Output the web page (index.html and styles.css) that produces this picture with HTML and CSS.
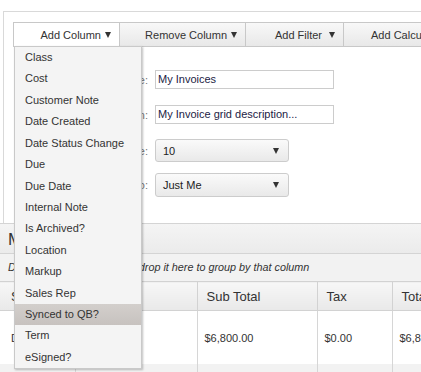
FILE: index.html
```html
<!DOCTYPE html>
<html>
<head>
<meta charset="utf-8">
<link rel="stylesheet" href="styles.css">
</head>
<body>
<div class="page">
  <section class="panel">
    <div class="toolbar">
      <div class="tb-item">
        <button class="tb-btn active w-add">Add Column <span class="caret"></span></button>
        <ul class="menu">
          <li>Class</li>
          <li>Cost</li>
          <li>Customer Note</li>
          <li>Date Created</li>
          <li>Date Status Change</li>
          <li>Due</li>
          <li>Due Date</li>
          <li>Internal Note</li>
          <li>Is Archived?</li>
          <li>Location</li>
          <li>Markup</li>
          <li>Sales Rep</li>
          <li class="hover">Synced to QB?</li>
          <li>Term</li>
          <li>eSigned?</li>
        </ul>
      </div>
      <button class="tb-btn w-remove">Remove Column <span class="caret"></span></button>
      <button class="tb-btn w-filter">Add Filter <span class="caret"></span></button>
      <button class="tb-btn w-calc">Add Calculation</button>
    </div>
    <div class="form">
      <div class="row r1">
        <label class="lbl">Grid Name:</label>
        <div class="input">My Invoices</div>
      </div>
      <div class="row r2">
        <label class="lbl">Grid Description:</label>
        <div class="input">My Invoice grid description...</div>
      </div>
      <div class="row r3">
        <label class="lbl">Page Size:</label>
        <div class="select"><span>10</span><span class="sel-caret"></span></div>
      </div>
      <div class="row r4">
        <label class="lbl">Visible To:</label>
        <div class="select"><span>Just Me</span><span class="sel-caret"></span></div>
      </div>
    </div>
  </section>
  <section class="grid">
    <div class="grid-title">My Invoices</div>
    <div class="group-row">Drag a column header and drop it here to group by that column</div>
    <table class="tbl">
      <colgroup>
        <col class="c1"><col class="c2"><col class="c3"><col class="c4"><col class="c5">
      </colgroup>
      <thead>
        <tr><th>Status</th><th>Customer</th><th>Sub Total</th><th>Tax</th><th>Total</th></tr>
      </thead>
      <tbody>
        <tr class="data"><td>Draft</td><td>Acme</td><td>$6,800.00</td><td>$0.00</td><td>$6,800.00</td></tr>
        <tr class="alt"><td></td><td></td><td></td><td></td><td></td></tr>
      </tbody>
    </table>
  </section>
</div>
</body>
</html>
```

FILE: styles.css
```css
html, body {
  margin: 0;
  padding: 0;
  overflow: hidden;
  background: #ffffff;
}
body {
  font-family: "Liberation Sans", Arial, sans-serif;
  color: #333333;
  width: 421px;
  height: 372px;
}
.page {
  width: 600px;
}
.panel {
  margin: 11px 0 0 3px;
  border-top: 1px solid #d9d9d9;
  border-left: 1px solid #d9d9d9;
  padding: 10px 0 0 9px;
  height: 201px;
}
.toolbar {
  display: flex;
  height: 25px;
}
.tb-item {
  position: relative;
  display: flex;
}
.tb-btn {
  font-family: "Liberation Sans", Arial, sans-serif;
  font-size: 11px;
  color: #333333;
  height: 25px;
  box-sizing: border-box;
  border: 1px solid #c8c8c8;
  background: linear-gradient(#f8f8f8, #e8e8e8);
  display: flex;
  align-items: center;
  justify-content: flex-end;
  padding: 0 8px 0 0;
  margin: 0 0 0 -1px;
  white-space: nowrap;
  flex: none;
}
.tb-item .tb-btn { margin-left: 0; }
.tb-btn.active { background: #ffffff; }
.w-add { width: 107px; }
.w-remove { width: 127px; }
.w-filter { width: 99px; }
.w-calc { width: 130px; justify-content: flex-start; padding-left: 27px; }
.caret {
  display: inline-block;
  width: 0;
  height: 0;
  border-left: 3.5px solid transparent;
  border-right: 3.5px solid transparent;
  border-top: 6px solid #333333;
  margin-left: 4px;
}
.w-filter .caret { margin-left: 7px; }
.menu {
  position: absolute;
  top: 24px;
  left: 1px;
  width: 128px;
  margin: 0;
  padding: 0;
  list-style: none;
  background: #f4f4f4;
  border: 1px solid #c9c9c9;
  box-sizing: border-box;
  box-shadow: 1px 1px 2px rgba(0,0,0,0.25);
  z-index: 10;
}
.menu li {
  height: 21.43px;
  line-height: 21.43px;
  padding-left: 10px;
  font-size: 11px;
  color: #333333;
  white-space: nowrap;
}
.menu li.hover {
  background: linear-gradient(#d3cfcc, #c7c2bf);
}
.form {
  display: flex;
  flex-direction: column;
}
.row {
  display: flex;
  align-items: center;
  gap: 7px;
}
.r1 { margin-top: 23px; }
.r2 { margin-top: 16px; }
.r3 { margin-top: 15px; }
.r4 { margin-top: 11px; }
.lbl {
  width: 135px;
  text-align: right;
  font-size: 11px;
  color: #777777;
  white-space: nowrap;
}
.input {
  width: 179px;
  height: 19px;
  box-sizing: border-box;
  border: 1px solid #cccccc;
  font-size: 11px;
  line-height: 17px;
  padding-left: 2px;
  color: #222244;
  white-space: nowrap;
  overflow: hidden;
}
.select {
  width: 134px;
  height: 23px;
  box-sizing: border-box;
  border: 1px solid #cccccc;
  border-radius: 3px;
  background: linear-gradient(#fafafa, #e9e9e9);
  display: flex;
  align-items: center;
  justify-content: space-between;
  padding: 0 9px 0 7px;
  font-size: 11px;
  color: #222222;
}
.r4 .select { height: 24px; }
.sel-caret {
  width: 0;
  height: 0;
  border-left: 3px solid transparent;
  border-right: 3px solid transparent;
  border-top: 6px solid #333333;
}
.grid {
  width: 600px;
}
.grid-title {
  height: 29px;
  border-top: 1px solid #d4d4d4;
  background: linear-gradient(#f4f4f4, #ebebeb);
  font-size: 17px;
  line-height: 31px;
  padding-left: 8px;
  color: #333333;
}
.group-row {
  height: 27px;
  border-top: 1px solid #d4d4d4;
  background: #f2f2f2;
  font-size: 10.8px;
  font-style: italic;
  line-height: 27px;
  padding-left: 8px;
  color: #333333;
}
.tbl {
  border-collapse: collapse;
  table-layout: fixed;
  width: 492px;
}
.c1 { width: 75px; }
.c2 { width: 122px; }
.c3 { width: 120px; }
.c4 { width: 75px; }
.c5 { width: 100px; }
.tbl th {
  height: 29px;
  box-sizing: border-box;
  padding: 0 0 0 9px;
  text-align: left;
  font-weight: normal;
  font-size: 13px;
  color: #333333;
  background: linear-gradient(#f7f7f7, #e9e9e9);
  border: 1px solid #d2d2d2;
  border-bottom: 1px solid #d2d2d2;
}
.tbl td {
  padding: 0 0 0 7px;
  font-size: 11px;
  color: #333333;
  border-left: 1px solid #d6d6d6;
  border-right: 1px solid #d6d6d6;
  white-space: nowrap;
  overflow: hidden;
}
.tbl th:first-child, .tbl td:first-child { border-left: none; padding-left: 11px; }
.tbl tr.data td {
  height: 53px;
  background: #ffffff;
}
.tbl tr.alt td {
  height: 20px;
  background: #f2f2f2;
}
```
